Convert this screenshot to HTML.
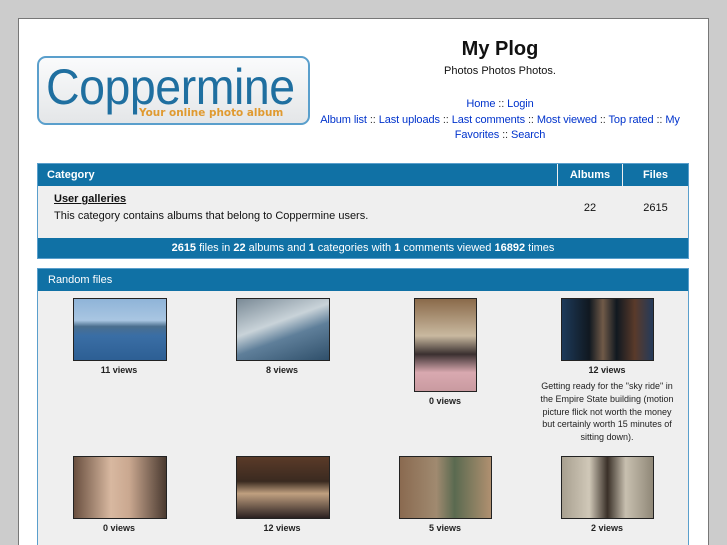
<!DOCTYPE html>
<html style="width:727px;height:545px;overflow:hidden"><head><meta charset="utf-8"><style>
*{margin:0;padding:0;box-sizing:border-box}
body{width:727px;height:545px;background:#ccc;font-family:"Liberation Sans",sans-serif;overflow:hidden;position:relative}
#page{position:absolute;left:18px;top:18px;width:691px;height:540px;background:#fff;border:1px solid #777;border-bottom:0}
.abs{position:absolute}
a{color:#0033cc;text-decoration:none}
.hdr{background:#1071a5;color:#fff;font-size:12px}
.t{position:absolute;left:37px;width:652px;border:1px solid #5a9fcc;background:#efefef}
.img{position:absolute;border:1px solid #222}
.v{position:absolute;font-size:9px;font-weight:bold;color:#222;text-align:center;width:160px}
</style></head><body>
<div id="page"></div>
<div class="abs" style="left:37px;top:56px;width:273px;height:69px;border:2px solid #5a9fcc;border-radius:9px;background:linear-gradient(#fafbfc,#e4e6e8)"></div>
<div class="abs" style="left:46px;top:58px;font-size:50px;color:#1f6fa0;font-family:'Liberation Sans',sans-serif;transform:scaleX(0.93);transform-origin:left;letter-spacing:-0.5px">Coppermine</div>
<div class="abs" style="left:139px;top:106px;font-size:11px;font-weight:bold;color:#e09a30;font-family:'DejaVu Sans',sans-serif;transform:scaleX(0.95);transform-origin:left">Your online photo album</div>
<div class="abs" style="left:390px;top:38px;width:220px;text-align:center;font-size:20px;font-weight:bold;color:#111">My Plog</div>
<div class="abs" style="left:390px;top:65px;width:220px;text-align:center;font-size:11px;color:#111">Photos Photos Photos.</div>
<div class="abs" style="left:312px;top:97px;width:376px;text-align:center;font-size:11px;line-height:15.5px;color:#333;letter-spacing:-0.1px"><a>Home</a> :: <a>Login</a><br><a>Album list</a> :: <a>Last uploads</a> :: <a>Last comments</a> :: <a>Most viewed</a> :: <a>Top rated</a> :: <a>My</a><br><a>Favorites</a> :: <a>Search</a></div>

<div class="t" style="top:163px;height:96px">
 <div class="abs hdr" style="left:0;top:0;width:519px;height:22px;padding:5px 9px;font-weight:bold;font-size:11px">Category</div>
 <div class="abs hdr" style="left:520px;top:0;width:64px;height:22px;padding-top:5px;text-align:center;font-weight:bold;font-size:11px">Albums</div>
 <div class="abs hdr" style="left:585px;top:0;width:65px;height:22px;padding-top:5px;text-align:center;font-weight:bold;font-size:11px">Files</div>
 <div class="abs" style="left:16px;top:29px;font-size:11px;font-weight:bold;text-decoration:underline;color:#111">User galleries</div>
 <div class="abs" style="left:16px;top:46px;font-size:11px;color:#111">This category contains albums that belong to Coppermine users.</div>
 <div class="abs" style="left:520px;top:38px;width:64px;text-align:center;font-size:11px;color:#111">22</div>
 <div class="abs" style="left:585px;top:38px;width:65px;text-align:center;font-size:11px;color:#111">2615</div>
 <div class="abs hdr" style="left:0;top:74px;width:650px;height:20px;padding-top:4px;text-align:center;font-size:11px"><b>2615</b> files in <b>22</b> albums and <b>1</b> categories with <b>1</b> comments viewed <b>16892</b> times</div>
</div>

<div class="t" style="top:268px;height:290px">
 <div class="abs hdr" style="left:0;top:0;width:650px;height:22px;padding:5px 10px;font-size:11px">Random files</div>
</div>
<div class="img" style="left:73px;top:298px;width:94px;height:63px;background:linear-gradient(#8fb4d8 0%,#a9c6e2 35%,#4b6f8e 45%,#3a6ea5 60%,#2d5f94 100%)"></div>
<div class="img" style="left:236px;top:298px;width:94px;height:63px;background:linear-gradient(160deg,#7a8a96,#c9d3d9 40%,#5f7f9a 60%,#2f4f6a)"></div>
<div class="img" style="left:414px;top:298px;width:63px;height:94px;background:linear-gradient(#8a6a4a,#c9b9a0 40%,#3a3030 60%,#d9a9b0 80%,#c99aa0)"></div>
<div class="img" style="left:561px;top:298px;width:93px;height:63px;background:linear-gradient(90deg,#1d3a5a,#101820 30%,#705a48 45%,#101820 60%,#5a3a2a 80%,#243a5a)"></div>
<div class="v" style="left:39px;top:365px">11 views</div>
<div class="v" style="left:202px;top:365px">8 views</div>
<div class="v" style="left:365px;top:396px">0 views</div>
<div class="v" style="left:527px;top:365px">12 views</div>
<div class="abs" style="left:535px;top:380px;width:144px;text-align:center;font-size:9px;line-height:12.8px;color:#222">Getting ready for the "sky ride" in the Empire State building (motion picture flick not worth the money but certainly worth 15 minutes of sitting down).</div>
<div class="img" style="left:73px;top:456px;width:94px;height:63px;background:linear-gradient(90deg,#6a5040,#d8b8a0 40%,#caa890 60%,#4a3a30)"></div>
<div class="img" style="left:236px;top:456px;width:94px;height:63px;background:linear-gradient(#5a3a28,#3a2a20 40%,#c0a080 60%,#2a2020)"></div>
<div class="img" style="left:399px;top:456px;width:93px;height:63px;background:linear-gradient(90deg,#8a6a50,#a08a70 40%,#5a6a50 60%,#b09070)"></div>
<div class="img" style="left:561px;top:456px;width:93px;height:63px;background:linear-gradient(90deg,#a8a090,#d0c8b8 30%,#3a3028 50%,#c8c0b0 70%,#908878)"></div>
<div class="v" style="left:39px;top:523px">0 views</div>
<div class="v" style="left:202px;top:523px">12 views</div>
<div class="v" style="left:365px;top:523px">5 views</div>
<div class="v" style="left:527px;top:523px">2 views</div>
</body></html>
